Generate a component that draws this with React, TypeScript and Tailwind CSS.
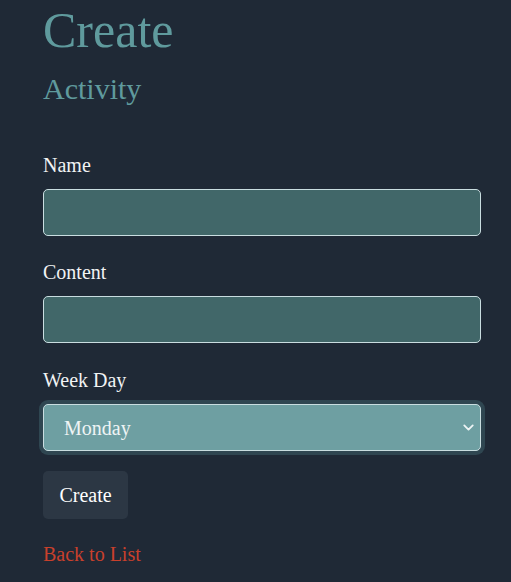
import { ChevronDown } from 'lucide-react'

export default function App() {
  return (
    <div className="min-h-screen bg-[#1f2936] font-['Liberation_Serif',serif] text-[20px] text-[#f1f3f4]">
      <div className="pl-[43px] w-[481px]">
        <h1 className="text-[50px] leading-[60px] text-[#5f9a9d] m-0">Create</h1>
        <h4 className="text-[30px] leading-[36px] text-[#5f9a9d] mt-[11px]">Activity</h4>

        <form className="mt-[43px] flex flex-col">
          <label className="leading-[30px]">Name</label>
          <input
            type="text"
            className="mt-[9px] h-[47px] rounded-[5px] border border-[#c9dde0] bg-[#416769] px-4 outline-none"
          />

          <label className="mt-[21px] leading-[30px]">Content</label>
          <input
            type="text"
            className="mt-[9px] h-[47px] rounded-[5px] border border-[#c9dde0] bg-[#416769] px-4 outline-none"
          />

          <label className="mt-[22px] leading-[30px]">Week Day</label>
          <div className="relative mt-[9px]">
            <div className="h-[47px] rounded-[5px] border border-[#c9dde0] bg-[#6e9fa2] pl-[20px] flex items-center text-[#eef4f5] ring-4 ring-[#2f4651]">
              Monday
            </div>
            <ChevronDown
              size={17}
              strokeWidth={2.5}
              className="absolute right-[4px] top-[15px] text-[#eef4f5]"
            />
          </div>

          <div className="mt-[20px]">
            <button
              type="button"
              className="h-[48px] w-[85px] rounded-[5px] bg-[#2c3744] text-white"
            >
              Create
            </button>
          </div>
        </form>

        <div className="mt-[20px]">
          <a href="#" className="text-[#c9402c]">
            Back to List
          </a>
        </div>
      </div>
    </div>
  )
}
